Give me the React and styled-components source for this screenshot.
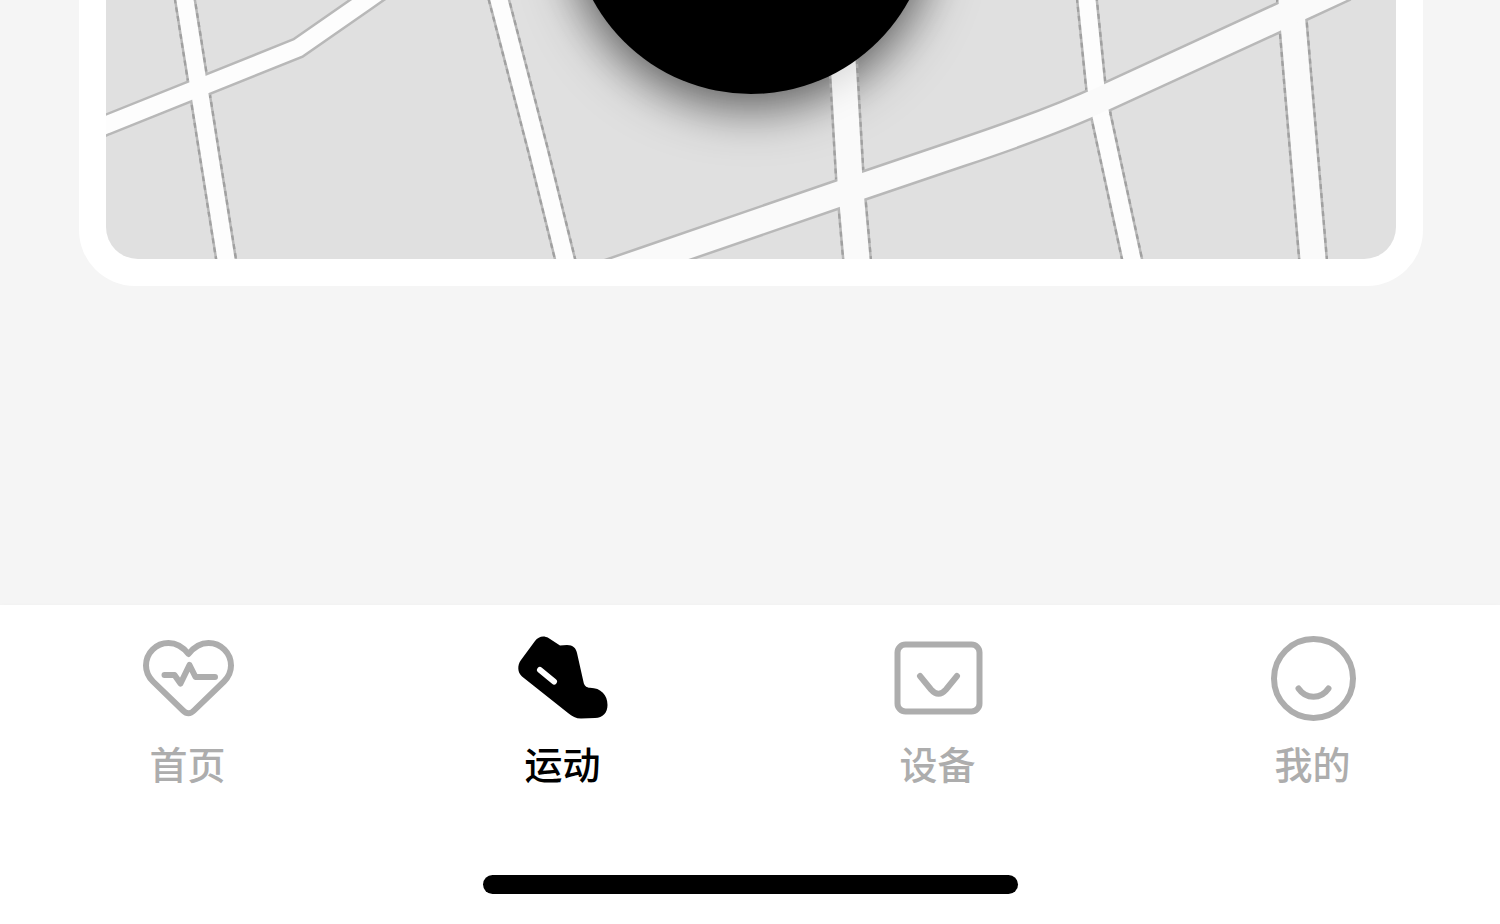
import React from 'react';
import styled, { createGlobalStyle } from 'styled-components';

const GlobalStyle = createGlobalStyle`
  * {
    box-sizing: border-box;
  }
  body {
    margin: 0;
    background: #f5f5f5;
    font-family: 'Noto Sans CJK SC', sans-serif;
  }
`;

const Page = styled.div`
  display: flex;
  flex-direction: column;
  min-height: 100vh;
`;

const Content = styled.main`
  flex: 1;
  padding: 0 77px 0 79px;
`;

const MapCard = styled.section`
  padding: 0 27px 27px;
  border-radius: 0 0 56px 56px;
  background: #fff;
`;

const MapFrame = styled.div`
  position: relative;
  overflow: hidden;
  border-radius: 0 0 32px 32px;
  background: #e0e0e0;
`;

const MapSvg = styled.svg`
  display: block;
  width: 100%;
  height: auto;
`;

const RoadEdge = styled.path`
  fill: none;
  stroke: ${({ $dashed }) => ($dashed ? '#a0a0a0' : '#b8b8b8')};
  stroke-width: ${({ $major }) => ($major ? 30 : 22)}px;
  stroke-dasharray: ${({ $dashed }) => ($dashed ? '5 4' : 'none')};
`;

const RoadFill = styled.path`
  fill: none;
  stroke: ${({ $major }) => ($major ? '#fafafa' : '#fdfdfd')};
  stroke-width: ${({ $major }) => ($major ? 25 : 17)}px;
`;

const StartButton = styled.button`
  position: absolute;
  bottom: 165px;
  left: 50%;
  width: 360px;
  height: 360px;
  padding: 0;
  border: 0;
  border-radius: 50%;
  background: #000;
  box-shadow: 0 8px 40px rgba(0, 0, 0, 0.15);
  transform: translateX(-50%);
  cursor: pointer;
`;

const BottomBar = styled.footer`
  display: flex;
  flex-direction: column;
  align-items: center;
  padding: 25px 0 30px;
  background: #fff;
  box-shadow: 0 0 4px rgba(0, 0, 0, 0.02);
`;

const Tabs = styled.nav`
  display: grid;
  grid-template-columns: repeat(4, 1fr);
  width: 100%;
`;

const Tab = styled.a`
  display: flex;
  flex-direction: column;
  align-items: center;
  gap: 13px;
  color: ${({ $active }) => ($active ? '#000' : '#adadad')};
  font-size: 38px;
  font-weight: 500;
  line-height: 48px;
  text-decoration: none;
`;

const TabIcon = styled.svg`
  width: 96px;
  height: 96px;
  fill: none;
  stroke: currentColor;
  stroke-width: 6px;
  stroke-linecap: round;
  stroke-linejoin: round;
`;

const HomeIndicator = styled.div`
  width: 535px;
  max-width: 60%;
  height: 19px;
  margin-top: 88px;
  border-radius: 10px;
  background: #000;
`;

const roads = [
  { d: 'M183 -12 L185 0 L198 82 L226 259 L228 271', dashed: true },
  { d: 'M90 132 L106 125 L298 48 L367 0 L384 -12' },
  { d: 'M496 -12 L499 0 L538 150 L565 259 L568 271', dashed: true },
  { d: 'M1086 -12 L1087 0 L1096 88 L1101 116 L1132 259 L1135 271', dashed: true },
  { d: 'M838 -12 L843 60 L850 180 L857 259 L858 271', major: true, dashed: true },
  { d: 'M1290 -12 L1291 0 L1313 259 L1314 271', major: true, dashed: true },
  { d: 'M560 290 L650 259 L836 195 L960 153 Q1050 123 1104 98 L1278 18 L1345 -13', major: true },
];

const tabs = [
  {
    id: 'home',
    label: '首页',
    icon: (
      <>
        <path d="M48.5 24C43 17 36 13 28.5 13C16 13 6 23 6 35.5C6 42 8.5 47 13 51.5L43 80.5Q48.5 86 54 80.5L84 51.5C88.5 47 91 42 91 35.5C91 23 81 13 68.5 13C61 13 54 17 48.5 24Z" />
        <path d="M24.5 45H34.5L40.5 53.5L49.5 35L55.5 47H75" />
      </>
    ),
  },
  {
    id: 'sport',
    label: '运动',
    active: true,
    icon: (
      <>
        <path
          fill="currentColor"
          stroke="none"
          d="M20 11C23.5 6.5 28.5 5 33.5 8L45 15.5L52 15C58 15 61 18 62 23L68.5 52C69.3 56 71.5 57.5 75 57.8C86 58 92.5 65 92.5 75C92.5 83 88 87.5 80 88L66 88.5C61 88.5 57 86.5 53 83L7 46.5C2.5 42.5 2 35.5 6 30Z"
        />
        <path stroke="#fff" d="M25 40L39 51.5" />
      </>
    ),
  },
  {
    id: 'device',
    label: '设备',
    icon: (
      <>
        <rect x="7.5" y="14.5" width="82" height="67" rx="8" />
        <path d="M30 46L41 59.5Q48.5 68 56 59.5L67 46" />
      </>
    ),
  },
  {
    id: 'mine',
    label: '我的',
    icon: (
      <>
        <circle cx="48.5" cy="48.5" r="39.5" />
        <path d="M33.5 58.5C41 69.5 56 69.5 63.5 58.5" />
      </>
    ),
  },
];

function RouteMap() {
  return (
    <MapSvg viewBox="106 0 1290 259" aria-hidden="true">
      <defs>
        <filter id="soft" x="-50%" y="-50%" width="200%" height="200%">
          <feGaussianBlur stdDeviation="27" />
        </filter>
      </defs>
      <circle cx="751" cy="-74" r="180" fillOpacity="0.55" filter="url(#soft)" />
      {roads.map((road) => (
        <g key={road.d}>
          <RoadEdge d={road.d} $major={road.major} />
          {road.dashed && <RoadEdge d={road.d} $major={road.major} $dashed />}
        </g>
      ))}
      {roads.map((road) => (
        <RoadFill key={road.d} d={road.d} $major={road.major} />
      ))}
    </MapSvg>
  );
}

export default function App() {
  return (
    <Page>
      <GlobalStyle />
      <Content>
        <MapCard>
          <MapFrame>
            <RouteMap />
            <StartButton type="button" aria-label="开始" />
          </MapFrame>
        </MapCard>
      </Content>
      <BottomBar>
        <Tabs>
          {tabs.map((tab) => (
            <Tab
              key={tab.id}
              href={`#${tab.id}`}
              $active={tab.active}
              aria-current={tab.active ? 'page' : undefined}
            >
              <TabIcon viewBox="0 0 96 96" aria-hidden="true">
                {tab.icon}
              </TabIcon>
              {tab.label}
            </Tab>
          ))}
        </Tabs>
        <HomeIndicator />
      </BottomBar>
    </Page>
  );
}
